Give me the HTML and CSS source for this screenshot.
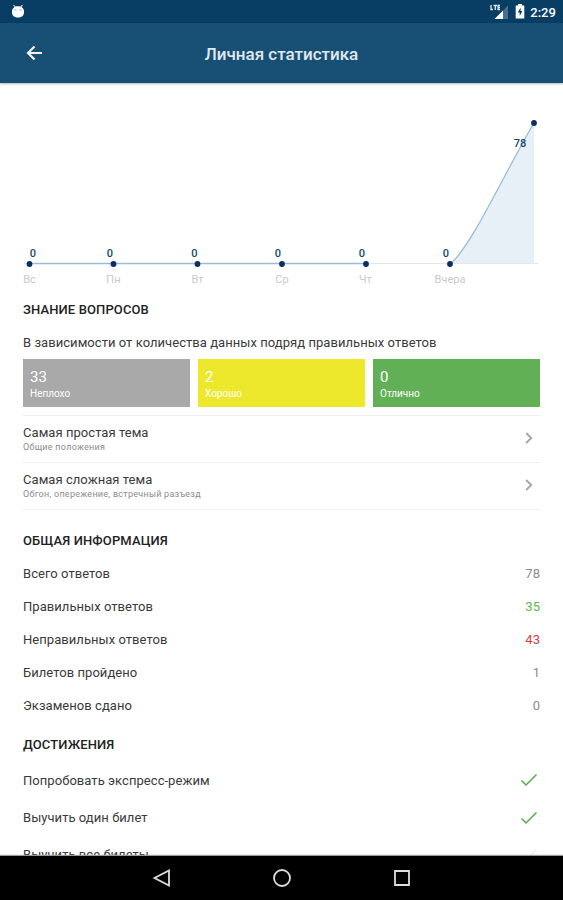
FILE: index.html
```
<!DOCTYPE html>
<html lang="ru">
<head>
  <meta charset="UTF-8">
  <title>Личная статистика</title>
  <link rel="stylesheet" href="styles.css">
</head>
<body>
  <div class="status-bar">
    <svg class="robot" width="14" height="16" viewBox="0 0 14 16">
      <path d="M2.600 2L4 4M11.400 2L10 4" stroke="#d5dfe7" stroke-width="1.200"/>
      <path d="M1 8.500C1 5.300 3.500 3.300 7 3.300S13 5.300 13 8.500V9.500C13 12.500 10.500 14.600 7 14.600S1 12.500 1 9.500Z" fill="#fff"/>
      <path d="M3.500 7h2M8.500 7h2" stroke="#8aa5ba"/>
    </svg>
    <div class="status-right">
      <svg class="signal" width="19" height="16" viewBox="0 0 19 16">
        <path d="M18 1.500V15H13V6.500Z" fill="#46708f"/>
        <path d="M13 6.500V15H4.500Z" fill="#fff"/>
        <path d="M1 1v4.500h2M3.500 1.500h3.500M5.300 1.500v4.500M10 1.500H8v4h2M8 3.500h2" fill="none" stroke="#dde6ed" stroke-width="1.300"/>
      </svg>
      <svg width="10" height="15" viewBox="0 0 10 15">
        <path d="M3 0h4v1.500h2.300V14.500H.7V1.500H3Z" fill="#fff"/>
        <path d="M5.600 3.500L2.800 8.500h1.900v3.600L7.400 7H5.600Z" fill="#0a3d64"/>
      </svg>
      <span class="clock">2:29</span>
    </div>
  </div>

  <header class="toolbar">
    <svg class="back" width="18" height="16" viewBox="0 0 18 16">
      <path d="M16 8H2.500M8.500 1.500L2 8l6.500 6.500" fill="none" stroke="#f0f4f8" stroke-width="2.200"/>
    </svg>
    <h1>Личная статистика</h1>
  </header>

  <main class="content">
    <!-- Answers per day -->
    <svg class="chart" width="563" height="205" viewBox="0 83 563 205">
      <path class="area" d="M450 264C471 248 508 166 534 123V264Z"/>
      <path class="axis" d="M24 263.500H538"/>
      <path class="line" d="M30 263.500H366M450 264C471 248 508 166 534 123"/>
      <g class="dots">
        <circle cx="29.500" cy="264" r="2.900"/>
        <circle cx="113.500" cy="264" r="2.900"/>
        <circle cx="197.500" cy="264" r="2.900"/>
        <circle cx="282" cy="264" r="2.900"/>
        <circle cx="366" cy="264" r="2.900"/>
        <circle cx="450" cy="264" r="2.900"/>
        <circle cx="534" cy="123" r="2.900"/>
      </g>
      <g class="values">
        <text x="33" y="257">0</text>
        <text x="110" y="257">0</text>
        <text x="194.500" y="257">0</text>
        <text x="278" y="257">0</text>
        <text x="362" y="257">0</text>
        <text x="446" y="257">0</text>
        <text x="520" y="147">78</text>
      </g>
      <g class="days">
        <text x="29.500" y="283">Вс</text>
        <text x="113.500" y="283">Пн</text>
        <text x="197.500" y="283">Вт</text>
        <text x="282" y="283">Ср</text>
        <text x="365.500" y="283">Чт</text>
        <text x="450" y="283">Вчера</text>
      </g>
    </svg>

    <h2>ЗНАНИЕ ВОПРОСОВ</h2>
    <p class="hint">В зависимости от количества данных подряд правильных ответов</p>
    <div class="tiles">
      <div class="tile gray"><b>33</b><span>Неплохо</span></div>
      <div class="tile yellow"><b>2</b><span>Хорошо</span></div>
      <div class="tile green"><b>0</b><span>Отлично</span></div>
    </div>

    <div class="topics">
      <div class="topic">
        <div>
          <p>Самая простая тема</p>
          <small>Общие положения</small>
        </div>
        <svg width="8" height="12" viewBox="0 0 8 12"><path d="M1.200 1L6.200 6l-5 5"/></svg>
      </div>
      <div class="topic">
        <div>
          <p>Самая сложная тема</p>
          <small>Обгон, опережение, встречный разъезд</small>
        </div>
        <svg width="8" height="12" viewBox="0 0 8 12"><path d="M1.200 1L6.200 6l-5 5"/></svg>
      </div>
    </div>

    <h2 class="info">ОБЩАЯ ИНФОРМАЦИЯ</h2>
    <div class="row"><span>Всего ответов</span><em>78</em></div>
    <div class="row"><span>Правильных ответов</span><em class="good">35</em></div>
    <div class="row"><span>Неправильных ответов</span><em class="bad">43</em></div>
    <div class="row"><span>Билетов пройдено</span><em>1</em></div>
    <div class="row"><span>Экзаменов сдано</span><em>0</em></div>

    <h2 class="goals">ДОСТИЖЕНИЯ</h2>
    <div class="row goal">
      <span>Попробовать экспресс-режим</span>
      <svg width="18" height="14" viewBox="0 0 18 14"><path d="M1.500 7.500L6 12 16.500 1.500"/></svg>
    </div>
    <div class="row goal">
      <span>Выучить один билет</span>
      <svg width="18" height="14" viewBox="0 0 18 14"><path d="M1.500 7.500L6 12 16.500 1.500"/></svg>
    </div>
    <div class="row goal off">
      <span>Выучить все билеты</span>
      <svg width="18" height="14" viewBox="0 0 18 14"><path d="M1.500 7.500L6 12 16.500 1.500"/></svg>
    </div>
  </main>

  <nav class="nav-bar">
    <svg width="20" height="20" viewBox="0 0 20 20"><path d="M17 2.500v15L2.500 10Z"/></svg>
    <svg width="20" height="20" viewBox="0 0 20 20"><circle cx="10" cy="10" r="8"/></svg>
    <svg width="20" height="20" viewBox="0 0 20 20"><path d="M3 3h14v14H3Z"/></svg>
  </nav>
</body>
</html>
```
FILE: styles.css
```
* {
  box-sizing: border-box;
}

body {
  margin: 0;
  height: 900px;
  display: flex;
  flex-direction: column;
  overflow: hidden;
  font-family: Roboto, "Liberation Sans", sans-serif;
  font-size: 13px;
  letter-spacing: 0.05px;
  color: #3a3a3a;
  background: #fff;
}

h1, h2, p {
  margin: 0;
}

.status-bar {
  flex: none;
  height: 23px;
  padding: 0 7px 0 11px;
  display: flex;
  align-items: center;
  justify-content: space-between;
  background: #083d64;
}

.robot {
  margin-top: -1px;
}

.status-right {
  display: flex;
  align-items: center;
}

.signal {
  margin-right: 6px;
}

.clock {
  margin: 2px 0 0 5px;
  font-size: 13px;
  font-weight: 500;
  color: #fff;
}

.toolbar {
  flex: none;
  height: 60px;
  display: flex;
  align-items: center;
  padding: 0 26px;
  color: #fff;
  background: #185075;
  box-shadow: 0 1px 2px rgba(0, 0, 0, 0.3);
  z-index: 1;
}

.toolbar h1 {
  flex: 1;
  padding: 2px 18px 0 0;
  text-align: center;
  font-size: 17px;
  font-weight: 500;
  letter-spacing: 0;
  color: #e0e9f0;
}

.content {
  flex: 1;
  min-height: 0;
  overflow: hidden;
  padding: 0 23px;
}

/* Chart */
.chart {
  display: block;
  margin: 0 -23px;
}

.area { fill: #e7f0f6; }
.axis { stroke: #e4e7ea; }

.line {
  fill: none;
  stroke: #9bbbd6;
  stroke-width: 1.3;
}

.dots { fill: #0a2f62; }

.values {
  font-size: 11px;
  font-weight: 500;
  fill: #174766;
  text-anchor: middle;
}

.days {
  font-size: 11px;
  fill: #cacaca;
  text-anchor: middle;
}

h2 {
  height: 44px;
  line-height: 44px;
  font-size: 13px;
  font-weight: 500;
  letter-spacing: 0.12px;
  color: #222;
}

.hint {
  height: 22px;
  line-height: 22px;
  margin-bottom: 5px;
  white-space: nowrap;
}

/* Knowledge tiles */
.tiles {
  display: flex;
  gap: 8px;
}

.tile {
  flex: 1;
  height: 48px;
  padding: 9px 7px 0;
  display: flex;
  flex-direction: column;
  color: #fff;
}

.tile b {
  font-size: 15px;
  line-height: 18px;
  font-weight: 400;
}

.tile span {
  font-size: 10px;
  line-height: 15px;
  letter-spacing: 0;
}

.gray { background: #a9a9a9; }
.yellow { background: #ede82b; }
.green { background: #62b055; }

.topics {
  margin-top: 8px;
  border-top: 1px solid #f0f0f0;
}

.topic {
  height: 47px;
  display: flex;
  align-items: center;
  justify-content: space-between;
  padding-right: 7px;
  border-bottom: 1px solid #f0f0f0;
}

.topic p {
  line-height: 17px;
}

.topic small {
  display: block;
  font-size: 9px;
  line-height: 13px;
  letter-spacing: 0.27px;
  color: #8c8c8c;
}

.topic svg {
  margin-top: -2px;
}

.topic svg path {
  fill: none;
  stroke: #a4a4a4;
  stroke-width: 1.8;
}

/* Lists */
h2.info {
  height: 33px;
  line-height: 33px;
  margin-top: 14px;
}

h2.goals {
  height: 32px;
  line-height: 32px;
  margin-top: 8px;
}

.row {
  height: 32.9px;
  display: flex;
  align-items: center;
  justify-content: space-between;
}

.row em {
  font-style: normal;
  color: #8a8a8a;
}

.row .good { color: #5cb84c; }
.row .bad { color: #dd3b3b; }

.goal {
  height: 37.4px;
  padding-right: 2px;
}

.goal svg path {
  fill: none;
  stroke: #55ad48;
  stroke-width: 1.5;
}

.off svg path {
  stroke: #f0f0f0;
}

/* System navigation */
.nav-bar {
  flex: none;
  height: 44px;
  display: flex;
  align-items: center;
  justify-content: center;
  gap: 100px;
  background: #000;
  box-shadow: 0 -1px 1px #999;
  z-index: 1;
}

.nav-bar svg * {
  fill: none;
  stroke: #ddd;
  stroke-width: 1.8;
}
```
